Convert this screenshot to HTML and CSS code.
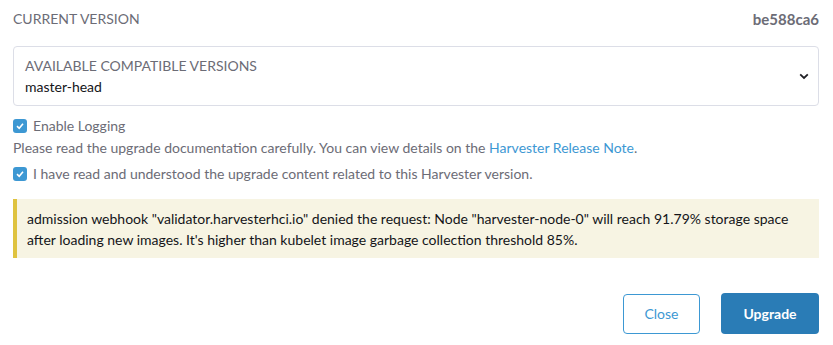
FILE: index.html
```html
<!DOCTYPE html>
<html lang="en">
<head>
    <meta charset="UTF-8">
    <meta name="viewport" content="width=device-width, initial-scale=1.0">
    <title>Upgrade Harvester</title>
    <link rel="stylesheet" href="styles.css">
</head>
<body>
    <div class="upgrade-dialog">
        <div class="version-row">
            <span class="version-label">CURRENT VERSION</span>
            <span class="version-value">be588ca6</span>
        </div>

        <div class="select-box">
            <div class="select-text">
                <div class="select-label">AVAILABLE COMPATIBLE VERSIONS</div>
                <div class="select-value">master-head</div>
            </div>
            <svg class="chevron" width="10" height="7" viewBox="0 0 10 7">
                <path d="M1.2 1.4 L5 5 L8.8 1.4" fill="none" stroke="#1f1f24" stroke-width="1.8"/>
            </svg>
        </div>

        <label class="check-row">
            <span class="checkbox">
                <svg width="10" height="10" viewBox="0 0 10 10"><path d="M2 5.2 L4.2 7.3 L8 2.8" fill="none" stroke="#fff" stroke-width="1.6"/></svg>
            </span>
            Enable Logging
        </label>

        <p class="notice">Please read the upgrade documentation carefully. You can view details on the <a href="#" class="link">Harvester Release Note</a>.</p>

        <label class="check-row">
            <span class="checkbox">
                <svg width="10" height="10" viewBox="0 0 10 10"><path d="M2 5.2 L4.2 7.3 L8 2.8" fill="none" stroke="#fff" stroke-width="1.6"/></svg>
            </span>
            I have read and understood the upgrade content related to this Harvester version.
        </label>

        <div class="banner">
            admission webhook "validator.harvesterhci.io" denied the request: Node "harvester-node-0" will reach 91.79% storage space after loading new images. It's higher than kubelet image garbage collection threshold 85%.
        </div>

        <div class="actions">
            <button class="btn btn-outline">Close</button>
            <button class="btn btn-primary">Upgrade</button>
        </div>
    </div>
</body>
</html>
```

FILE: styles.css
```css
* {
    margin: 0;
    padding: 0;
    box-sizing: border-box;
}

body {
    font-family: Lato, "Open Sans", sans-serif;
    font-size: 14px;
    color: #6c6c76;
    background: #ffffff;
}

.upgrade-dialog {
    padding: 9px 14px 0 13px;
}

.version-row {
    display: flex;
    justify-content: space-between;
    align-items: center;
    line-height: 20px;
}

.version-value {
    font-weight: 700;
    font-size: 15px;
    color: #6c6c76;
}

.select-box {
    margin-top: 17px;
    height: 60px;
    border: 1px solid #dcdee7;
    border-radius: 4px;
    padding: 9px 11px 0 11px;
    display: flex;
    justify-content: space-between;
    align-items: center;
}

.select-text {
    align-self: flex-start;
}

.select-label {
    line-height: 20px;
}

.select-value {
    line-height: 20px;
    margin-top: 1px;
    color: #141419;
}

.chevron {
    margin-top: -9px;
    margin-right: -2px;
}

.check-row {
    display: flex;
    align-items: center;
    gap: 6px;
    line-height: 20px;
    margin-top: 10px;
}

.check-row + .notice {
    margin-top: 2px;
}

.notice + .check-row {
    margin-top: 6px;
}

.checkbox {
    width: 14px;
    height: 14px;
    border-radius: 3px;
    background: #3d98d3;
    display: inline-flex;
    align-items: center;
    justify-content: center;
}

.notice {
    line-height: 20px;
}

.link {
    color: #3d98d3;
    text-decoration: none;
}

.banner {
    margin-top: 15px;
    background: #f7f4e3;
    border-left: 4px solid #dfc33f;
    padding: 9px 10px 8px 10px;
    line-height: 21px;
    color: #141419;
}

.actions {
    display: flex;
    justify-content: flex-end;
    align-items: center;
    gap: 21px;
    margin-top: 35px;
}

.btn {
    font-family: Lato, "Open Sans", sans-serif;
    font-size: 14px;
    border-radius: 4px;
    cursor: pointer;
}

.btn-outline {
    width: 77px;
    height: 40px;
    background: #ffffff;
    color: #3d98d3;
    border: 1px solid #3d98d3;
}

.btn-primary {
    width: 98px;
    height: 41px;
    background: #2a7cb6;
    color: #ffffff;
    font-weight: 700;
    border: none;
}
```
